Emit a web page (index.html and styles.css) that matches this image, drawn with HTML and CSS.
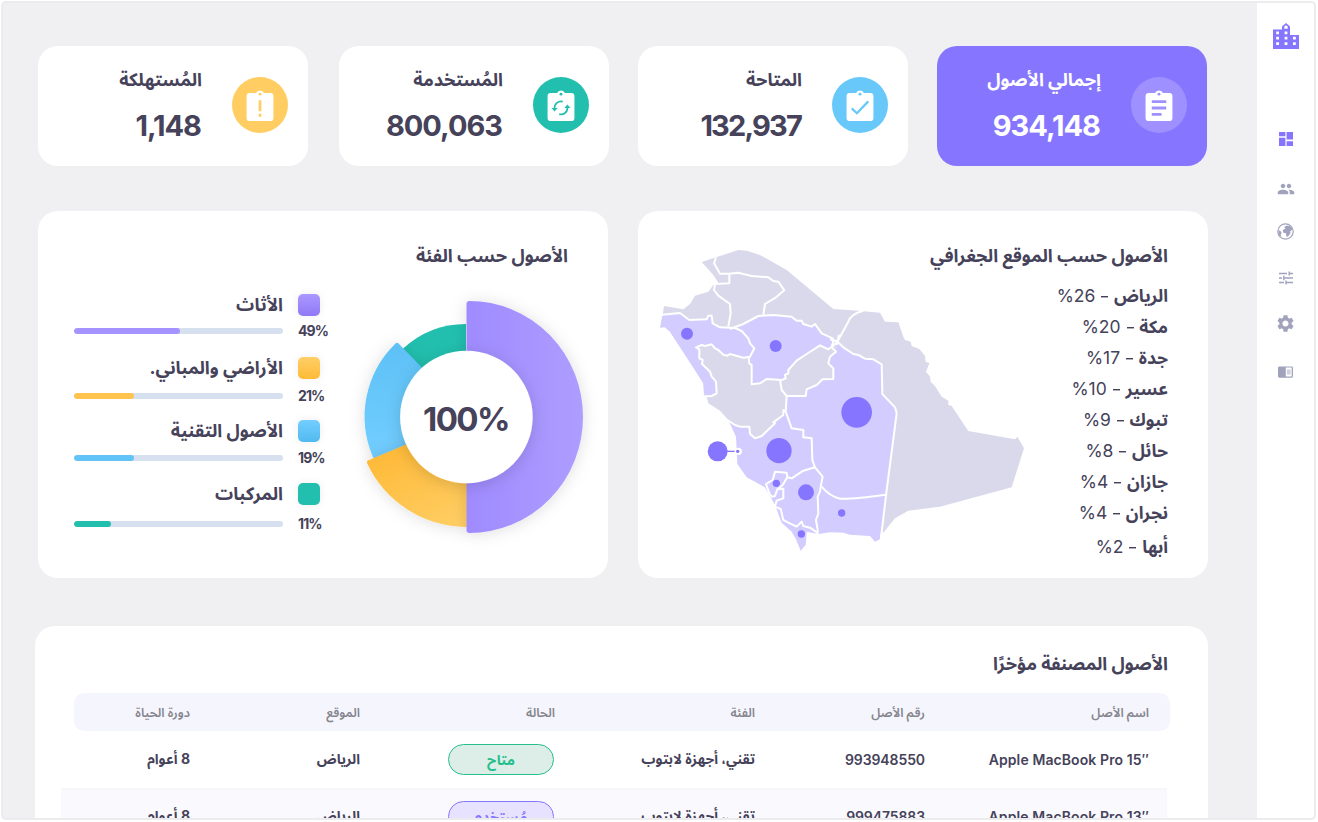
FILE: index.html
```html
<!DOCTYPE html>
<html lang="ar" dir="rtl">
<head>
<meta charset="utf-8">
<title>لوحة الأصول</title>
<link rel="stylesheet" href="styles.css">
</head>
<body>
<div class="app">
  <nav class="sidebar">
    <svg class="logo" viewBox="0 0 26 26" fill="#8676ff"><path fill-rule="evenodd" d="M0 6.500h9V3.500L13 0l4 3.500V12h9v14H0zM11.300 3.500v2.200h3.400V3.500L13 2.200zM3.200 8.500v2.800h2.800V8.500zm0 5.300v2.800h2.800v-2.800zm0 5.500v2.800h2.800v-2.800zM11.600 8.500v2.800h2.800V8.500zm0 5.300v2.800h2.800v-2.800zm0 5.500v2.800h2.800v-2.800zM20 13.800v2.800h2.800v-2.800zm0 5.500v2.800h2.800v-2.800z"/></svg>
    <svg class="nav-icon dash" viewBox="0 0 14 14" fill="#8676ff"><path d="M0 0h6.400v4.200H0zM7.600 0H14v7.600H7.600zM0 5.800h6.400V14H0zM7.600 9.200H14V14H7.600z"/></svg>
    <svg class="nav-icon people" viewBox="0 0 24 24"><path d="M16 11c1.660 0 2.990-1.340 2.990-3S17.660 5 16 5s-3 1.340-3 3 1.340 3 3 3zm-8 0c1.660 0 2.990-1.340 2.990-3S9.660 5 8 5 5 6.340 5 8s1.340 3 3 3zm0 2c-2.330 0-7 1.170-7 3.500V19h14v-2.500c0-2.330-4.670-3.500-7-3.500zm8 0c-.29 0-.62.020-.97.050 1.160.84 1.970 1.970 1.970 3.450V19h6v-2.500c0-2.330-4.670-3.500-7-3.500z"/></svg>
    <svg class="nav-icon globe" viewBox="0 0 17 17"><circle cx="8.500" cy="8.500" r="7.700" fill="none" stroke="#a1a3bd" stroke-width="1.200"/><path d="M7 4l3-1.600 3.400.8 2 3-.8 1.300-1.300.6.200 2-2.600 3.600-1.600-.4-.3-3-2.600-.5-.7-2L7 6l1.800-.5zM1.300 7l2.200 1 1.200 2-1 1.600.7 2.400L2 12z"/></svg>
    <svg class="nav-icon tune" viewBox="0 0 14 14" fill="none" stroke="#a1a3bd" stroke-width="1.400"><path d="M0 2.500h8M10 2.500h4M10.200.5v4M0 7h3M4.800 4.800v4.400M4.800 7H14M0 11.500h5M7 9.500v4M7 11.500h7"/></svg>
    <svg class="nav-icon gear" viewBox="2 2 20 20"><path d="M19.140 12.940c.04-.3.060-.61.060-.94 0-.32-.02-.64-.07-.94l2.030-1.580c.18-.14.230-.41.120-.61l-1.920-3.320c-.12-.22-.37-.29-.59-.22l-2.390.96c-.5-.38-1.030-.7-1.620-.94l-.36-2.540c-.04-.24-.24-.41-.48-.41h-3.840c-.24 0-.43.170-.47.410l-.36 2.540c-.59.240-1.130.57-1.620.94l-2.390-.96c-.22-.08-.47 0-.59.220L2.740 8.870c-.12.210-.08.470.120.610l2.030 1.580c-.05.300-.09.630-.09.940s.02.640.07.940l-2.030 1.580c-.18.140-.23.410-.12.610l1.920 3.320c.12.220.37.290.59.220l2.390-.96c.5.380 1.030.7 1.620.94l.36 2.540c.05.240.24.410.48.410h3.840c.24 0 .44-.17.470-.41l.36-2.540c.59-.24 1.130-.56 1.620-.94l2.390.96c.22.080.47 0 .59-.22l1.920-3.320c.12-.22.070-.47-.12-.61zM12 15.600c-1.980 0-3.600-1.620-3.600-3.600s1.620-3.600 3.600-3.600 3.600 1.620 3.600 3.600-1.620 3.600-3.600 3.600z"/></svg>
    <svg class="nav-icon reader" viewBox="0 0 16 12"><path fill-rule="evenodd" d="M1.500 0h13Q16 0 16 1.500v9q0 1.500-1.500 1.500h-13Q0 12 0 10.500v-9Q0 0 1.500 0zM8.300 1.200v9.600h6.300V1.200z"/><path d="M9.500 3.500h4v1h-4zM9.500 5.500h4v1h-4zM9.500 7.500h4v1h-4z"/></svg>
  </nav>

  <main class="main">
    <section class="stats">
      <article class="stat stat-primary">
        <span class="badge"><svg viewBox="0 0 26 30"><path class="board" d="M3 3h6.200a4 3.600 0 0 1 7.600 0H23q3 0 3 3v21q0 3-3 3H3q-3 0-3-3V6q0-3 3-3z"/><circle class="hole" cx="13" cy="4" r="1.400"/><path class="mark" stroke-width="2.700" d="M6 11.300h14M6 17.400h14M6 23.500h9.500"/></svg></span>
        <div class="stat-text"><h3>إجمالي الأصول</h3><strong>934,148</strong></div>
      </article>
      <article class="stat stat-blue">
        <span class="badge"><svg viewBox="0 0 26 30"><path class="board" d="M3 3h6.200a4 3.600 0 0 1 7.600 0H23q3 0 3 3v21q0 3-3 3H3q-3 0-3-3V6q0-3 3-3z"/><circle class="hole" cx="13" cy="4" r="1.400"/><path class="mark" stroke-width="2.200" d="M5 17.800l5 4.700L21 11"/></svg></span>
        <div class="stat-text"><h3>المتاحة</h3><strong class="tight">132,937</strong></div>
      </article>
      <article class="stat stat-green">
        <span class="badge"><svg viewBox="0 0 26 30"><path class="board" d="M3 3h6.200a4 3.600 0 0 1 7.600 0H23q3 0 3 3v21q0 3-3 3H3q-3 0-3-3V6q0-3 3-3z"/><circle class="hole" cx="13" cy="4" r="1.400"/><path class="mark" stroke-width="1.700" d="M6.800 17.800a6.200 6.200 0 0 1 7.900-6.500M19.200 17a6.200 6.200 0 0 1-7.900 6.400"/><path class="hole" d="M3.800 17.500h6l-3 3.300zM16.200 17.400h6l-3-3.300z"/></svg></span>
        <div class="stat-text"><h3>المُستخدمة</h3><strong>800,063</strong></div>
      </article>
      <article class="stat stat-yellow">
        <span class="badge"><svg viewBox="0 0 26 30"><path class="board" d="M3 3h6.200a4 3.600 0 0 1 7.600 0H23q3 0 3 3v21q0 3-3 3H3q-3 0-3-3V6q0-3 3-3z"/><circle class="hole" cx="13" cy="4" r="1.400"/><path class="mark" stroke-width="2.600" d="M13 10v10.500M13 23v2.800"/></svg></span>
        <div class="stat-text"><h3>المُستهلكة</h3><strong>1,148</strong></div>
      </article>
    </section>

    <section class="panels">
      <article class="panel geo">
        <div class="geo-info">
          <h2>الأصول حسب الموقع الجغرافي</h2>
          <ul class="cities">
            <li><b>الرياض</b> <i>–</i> <bdi dir="ltr">%26</bdi></li>
            <li><b>مكة</b> <i>–</i> <bdi dir="ltr">%20</bdi></li>
            <li><b>جدة</b> <i>–</i> <bdi dir="ltr">%17</bdi></li>
            <li><b>عسير</b> <i>–</i> <bdi dir="ltr">%10</bdi></li>
            <li><b>تبوك</b> <i>–</i> <bdi dir="ltr">%9</bdi></li>
            <li><b>حائل</b> <i>–</i> <bdi dir="ltr">%8</bdi></li>
            <li><b>جازان</b> <i>–</i> <bdi dir="ltr">%4</bdi></li>
            <li><b>نجران</b> <i>–</i> <bdi dir="ltr">%4</bdi></li>
            <li><b>أبها</b> <i>–</i> <bdi dir="ltr">%2</bdi></li>
          </ul>
        </div>
        <svg class="map" viewBox="0 0 1200 990">
          <path class="land" d="M185 96L228 82 295 60 320 62 360 75 440 120 580 237 655 242 720 248 735 275 775 277 790 320 795 330 812 335 815 348 838 357 855 378 857 395 868 400 858 425 870 440 872 455 885 468 905 500 925 512 925 525 935 528 985 603 1125 628 1132 620 1152 655 1115 772 900 830 805 842 765 865 730 908 600 800 340 700 265 570 240 542 205 520 200 502 192 498 190 460 155 405 90 305 75 292 68 255 72 228 130 238 150 222 165 197 205 185 220 165 235 158 220 135Z"/>
          <g class="active">
            <path d="M68 252L120 249 148 270 200 268 205 257 215 257 218 280 240 292 285 294 305 303 325 325 330 340 343 355 330 380 310 383 270 372 250 374 235 360 225 355 215 343 195 348 185 345 168 352 178 358 178 385 188 390 186 402 210 425 215 440 228 455 230 490 215 498 193 498 190 460 155 405 90 305 75 292 60 293Z"/>
            <path d="M285 294L310 282 355 258 400 255 455 260 470 272 485 272 490 282 515 290 525 282 545 310 578 325 580 335 575 350 565 358 540 346 500 372 470 392 445 420 445 430 435 435 437 445 425 450 380 447 360 460 335 463 335 405 328 400 326 383 332 370 343 355 330 340 325 325 305 303Z"/>
            <path d="M592 335L610 352 640 372 655 375 675 386 700 388 725 403 727 492 765 532 770 550 740 780 720 928 705 935 690 918 630 914 610 908 570 907 535 912 500 905 497 945 482 962 468 928 455 905 425 878 405 825 385 790 375 772 320 742 292 702 288 620 265 570 285 585 300 590 328 590 330 612 345 625 365 618 405 580 430 555 430 540 440 530 440 498 497 498 500 478 530 465 548 448 580 447 580 415 565 400 570 380 588 365Z"/>
          </g>
          <g class="borders">
            <path d="M228 82L222 100 240 131 268 131 268 160 225 162 222 180 235 197 270 222 272 250 265 290"/>
            <path d="M268 131L295 128 335 138 385 142 400 153 415 155 433 181 408 202 375 222 370 255"/>
            <path d="M66 254L120 249 148 270 200 268 205 257 215 257 218 280 240 292 285 294 305 303 325 325 330 340 343 355 330 380 310 383 270 372 262 377 250 374 235 360 225 355 215 343 195 348 185 345 168 352 178 358 178 385 188 390 186 402 210 425 215 440 228 455 230 490 215 498 190 499"/>
            <path d="M270 297L310 282 355 258 400 255 455 260 470 272 485 272 490 282 515 290 525 282 545 310 578 325 580 335 575 350 565 358 540 346 500 372 470 392 445 420 445 430 435 435 437 445 425 450 380 447 360 460 335 463 335 405 328 400 326 383"/>
            <path d="M592 335L575 352 588 365 570 380 565 400 580 415 580 447 548 448 530 465 500 478 497 498 440 498 425 480 420 450M570 328L595 335M597 314L590 345"/>
            <path d="M670 242Q632 252 625 275L592 335 610 352 640 372 655 375 675 386 700 388 725 403 727 492 765 532 770 550 740 780 721 940M735 794Q640 808 600 806 570 800 545 770"/>
            <path d="M440 498L437 545 455 595 490 600 490 622 515 625 517 690 525 712 548 740 543 765 540 785 533 800 535 850 528 870 533 900 533 915"/>
            <path d="M262 570L285 585 300 590 328 590 330 612 345 625 365 618 405 580 400 577 430 555 430 540 437 545"/>
            <path d="M525 712L490 722 455 745 442 742 440 728 405 725 398 750 378 762 388 790 395 800 405 798 412 778 430 776 430 805 410 812 405 830 422 837 430 870 445 878 470 890 485 875 490 888 510 893 532 908M442 742L428 765 412 778"/>
          </g>
          <g class="pins">
            <path d="M233 664H293" stroke="#8676ff" stroke-width="4"/>
            <circle cx="295" cy="664" r="11" fill="#fff"/><circle cx="293" cy="664" r="5"/>
            <circle cx="233" cy="664" r="30"/><circle cx="141" cy="311" r="18"/><circle cx="407" cy="348" r="18"/>
            <circle cx="417" cy="662" r="38"/><circle cx="650" cy="547" r="46"/><circle cx="498" cy="787" r="24"/>
            <circle cx="409" cy="760" r="11"/><circle cx="484" cy="912" r="11"/><circle cx="605" cy="849" r="11"/>
          </g>
        </svg>
      </article>

      <article class="panel category">
        <h2>الأصول حسب الفئة</h2>
        <div class="category-body">
          <svg class="donut" viewBox="-140 -140 280 280">
            <defs>
              <linearGradient id="gp" gradientUnits="userSpaceOnUse" x1="0" y1="0" x2="116" y2="0"><stop offset="0" stop-color="#9f8bff"/><stop offset="1" stop-color="#ae9dff"/></linearGradient>
              <linearGradient id="gy" gradientUnits="userSpaceOnUse" x1="-60" y1="30" x2="-20" y2="110"><stop offset="0" stop-color="#febb3b"/><stop offset="1" stop-color="#ffcd62"/></linearGradient>
              <linearGradient id="gb" gradientUnits="userSpaceOnUse" x1="-60" y1="-70" x2="-80" y2="40"><stop offset="0" stop-color="#5ec1f6"/><stop offset="1" stop-color="#72cdff"/></linearGradient>
              <filter id="soft" x="-30%" y="-30%" width="160%" height="160%"><feDropShadow dx="0" dy="1" stdDeviation="8" flood-color="#000" flood-opacity=".13"/></filter>
              <filter id="hole" x="-30%" y="-30%" width="160%" height="160%"><feDropShadow dx="0" dy="3" stdDeviation="8" flood-color="#000" flood-opacity=".14"/></filter>
            </defs>
            <path d="M0 0L-63.400-68A93 93 0 0 1 0-93Z" fill="#22bfae"/>
            <path filter="url(#soft)" d="M0 0L-91 38.500A99.500 99.500 0 0 1-69-71.500Z" fill="url(#gb)" stroke="url(#gb)" stroke-width="5" stroke-linejoin="round"/>
            <path filter="url(#soft)" d="M0 5V107.500A107.500 107.500 0 0 1-96.500 45.500Z" fill="url(#gy)" stroke="url(#gy)" stroke-width="5" stroke-linejoin="round"/>
            <path filter="url(#soft)" d="M3.500-113A110.500 113 0 0 1 3.500 113Z" fill="url(#gp)" stroke="url(#gp)" stroke-width="6" stroke-linejoin="round"/>
            <circle cx=".4" r="66.300" fill="#fff" filter="url(#hole)"/>
            <text class="donut-label" x="0" y="14" text-anchor="middle">100%</text>
          </svg>
          <div class="legend">
            <div class="item purple"><span class="name">الأثاث</span><i class="swatch"></i><div class="track"><div class="fill" style="width:50.700%"></div></div><b>49%</b></div>
            <div class="item yellow"><span class="name">الأراضي والمباني.</span><i class="swatch"></i><div class="track"><div class="fill" style="width:28.700%"></div></div><b>21%</b></div>
            <div class="item blue"><span class="name">الأصول التقنية</span><i class="swatch"></i><div class="track"><div class="fill" style="width:28.700%"></div></div><b>19%</b></div>
            <div class="item green"><span class="name">المركبات</span><i class="swatch"></i><div class="track"><div class="fill" style="width:17.700%"></div></div><b>11%</b></div>
          </div>
        </div>
      </article>
    </section>

    <section class="table-card">
      <h2 class="t-table">الأصول المصنفة مؤخرًا</h2>
      <div class="row head"><span>اسم الأصل</span><span>رقم الأصل</span><span>الفئة</span><span>الحالة</span><span>الموقع</span><span>دورة الحياة</span></div>
      <div class="row"><span class="latin"><bdi dir="ltr">Apple MacBook Pro 15″</bdi></span><span class="latin num">993948550</span><span>تقني، أجهزة لابتوب</span><span class="pill available">متاح</span><span>الرياض</span><span>8 أعوام</span></div>
      <div class="row alt"><span class="latin"><bdi dir="ltr">Apple MacBook Pro 13″</bdi></span><span class="latin num">999475883</span><span>تقني، أجهزة لابتوب</span><span class="pill used">مُستخدم</span><span>الرياض</span><span>8 أعوام</span></div>
    </section>
  </main>
</div>
</body>
</html>
```
FILE: styles.css
```css
* { box-sizing: border-box; }
body { margin: 0; height: 822px; overflow: hidden; background: #fff; color: #45425a; font-family: Inter, "Noto Sans Arabic", "DejaVu Sans", sans-serif; }
h2, h3, ul { margin: 0; padding: 0; font-weight: 700; }
.app { display: flex; width: 1311px; height: 815px; margin: 3px 4px 0 3px; overflow: hidden; background: #f0f0f2; border-radius: 3px; box-shadow: 0 0 0 2px #ececee; }
.sidebar { flex: 0 0 57px; display: flex; flex-direction: column; align-items: center; background: #fff; padding: 20px 0 0 0; }
.nav-icon { fill: #a1a3bd; }
.sidebar svg { flex: none; display: block; }
.logo { width: 26px; height: 26px; }
.nav-icon.dash { width: 14px; height: 14px; margin-top: 83px; fill: #8676ff; }
.nav-icon.people { width: 18px; height: 18px; margin-top: 34px; }
.nav-icon.globe { width: 17px; height: 17px; margin-top: 25px; }
.nav-icon.tune { width: 14px; height: 14px; margin-top: 31px; fill: none; }
.nav-icon.gear { width: 17px; height: 17px; margin-top: 30px; }
.nav-icon.reader { width: 15px; height: 12px; margin-top: 34px; }
.main { flex: 1; padding: 43px 50px 0 32px; }

.stats { display: flex; gap: 29px; height: 120px; }
.stat { width: 270px; display: flex; align-items: center; gap: 30px; padding: 0 20px 2px; background: #fff; border-radius: 20px; }
.stat:last-child { margin-right: 2px; }
.badge { flex: none; display: flex; align-items: center; justify-content: center; width: 56px; height: 56px; border-radius: 50%; background: var(--tone); }
.badge svg { width: 28px; height: 31px; margin-top: 0; }
.board { fill: #fff; }
.hole { fill: var(--tone); }
.mark { fill: none; stroke: var(--tone); }
.stat-text { display: flex; flex-direction: column; gap: 13px; margin-top: -3px; }
.stat h3 { font-size: 18px; line-height: 32px; }
.stat strong { font-size: 29px; line-height: 34px; direction: ltr; text-align: right; letter-spacing: -1px; margin-right: 1px; }
.stat strong.tight { letter-spacing: -1.800px; }
.stat-primary { --tone: #9e91ff; background: #8676ff; color: #fff; }
.stat-blue { --tone: #69c8fa; }
.stat-green { --tone: #22bfae; }
.stat-yellow { --tone: #ffcd62; }

.panels { display: flex; gap: 30px; height: 367px; margin: 45px -1px 0 0; }
.panel { width: 570px; padding: 30px 40px; background: #fff; border-radius: 20px; }
h2 { font-size: 18px; line-height: 30px; white-space: nowrap; }
.geo { display: flex; padding: 30px 40px 0 0; }
.geo-info { width: 128px; }
.cities { list-style: none; margin-top: 9px; }
.cities li { height: 31px; line-height: 31px; font-size: 17.500px; font-weight: 400; white-space: nowrap; }
.cities b { font-weight: 700; }
.cities i { display: inline-block; font-style: normal; transform: scaleX(.8); }
.cities bdi { letter-spacing: -.5px; }
.cities li:last-child { padding-top: 3px; }
.map { flex: none; width: 400px; height: 330px; margin-top: -11px; }
.land { fill: #dad9eb; }
.active { fill: #d3ccff; }
.borders { fill: none; stroke: #fff; stroke-width: 6; stroke-linejoin: round; }
.pins { fill: #8676ff; }

.category-body { display: flex; direction: ltr; margin: 3px -40px 0 -4px; }
.legend { order: -1; width: 252px; padding-top: 20px; }
.item { display: grid; grid-template-columns: 209px 1fr; grid-template-rows: 22px 30px; column-gap: 15px; height: 63px; align-items: center; }
.item:nth-child(2) { grid-template-rows: 22px 33px; }
.item:nth-child(3) { grid-template-rows: 22px 32px; }
.item:last-child { grid-template-rows: 22px 38px; }
.name { font-size: 18px; font-weight: 700; text-align: right; direction: rtl; white-space: nowrap; }
.swatch { width: 22px; height: 22px; border-radius: 5px; background: linear-gradient(var(--a), var(--b)); box-shadow: 0 0 10px rgba(0,0,0,.07); }
.track { height: 6px; border-radius: 3px; background: #d7e0ee; overflow: hidden; }
.fill { height: 6px; border-radius: 3px; background: var(--bar); }
.item b { font-size: 14px; line-height: 16px; letter-spacing: -.9px; }
.purple { --a: #ab98ff; --b: #8f79f6; --bar: #a593ff; }
.yellow { --a: #ffce68; --b: #fdbb36; --bar: #ffc44d; }
.blue { --a: #74ceff; --b: #51baf0; --bar: #62c3f9; }
.green { --a: #22bfae; --b: #22bfae; --bar: #22bfae; }
.donut { flex: none; width: 280px; height: 280px; margin-top: 3px; overflow: visible; }
.donut-label { font-size: 33px; font-weight: 700; fill: #45425a; direction: ltr; letter-spacing: -1.600px; }

.table-card { margin: 48px -1px 0 0; height: 260px; width: 1173px; padding: 23px 38px 0; background: #fff; border-radius: 20px; }
.t-table { padding-right: 2px; }
.row { display: grid; grid-template-columns: 224px 170px 200px 195px 170px 1fr; align-items: center; height: 57px; padding-right: 21px; font-size: 14px; font-weight: 700; white-space: nowrap; }
.row.head { height: 38px; margin: 14px 0 0; border-radius: 10px; background: #f5f5fd; color: #85858d; font-size: 12.500px; font-weight: 600; width: 1096px; padding-top: 1px; }
.row.alt { margin: 0 3px 0 -12px; padding-right: 18px; background: #fafafe; box-shadow: inset 0 2px 2px #f5f5fa; }
.latin { font-weight: 600; }
.latin bdi { letter-spacing: .1px; }
.num { letter-spacing: -.1px; }
.pill { width: 106px; height: 31px; margin-right: 1px; border: 1px solid; border-radius: 16px; text-align: center; line-height: 29px; }
.available { color: #25bf8d; background: #ddeee8; }
.used { color: #8676ff; background: #e6e2ff; }
```
